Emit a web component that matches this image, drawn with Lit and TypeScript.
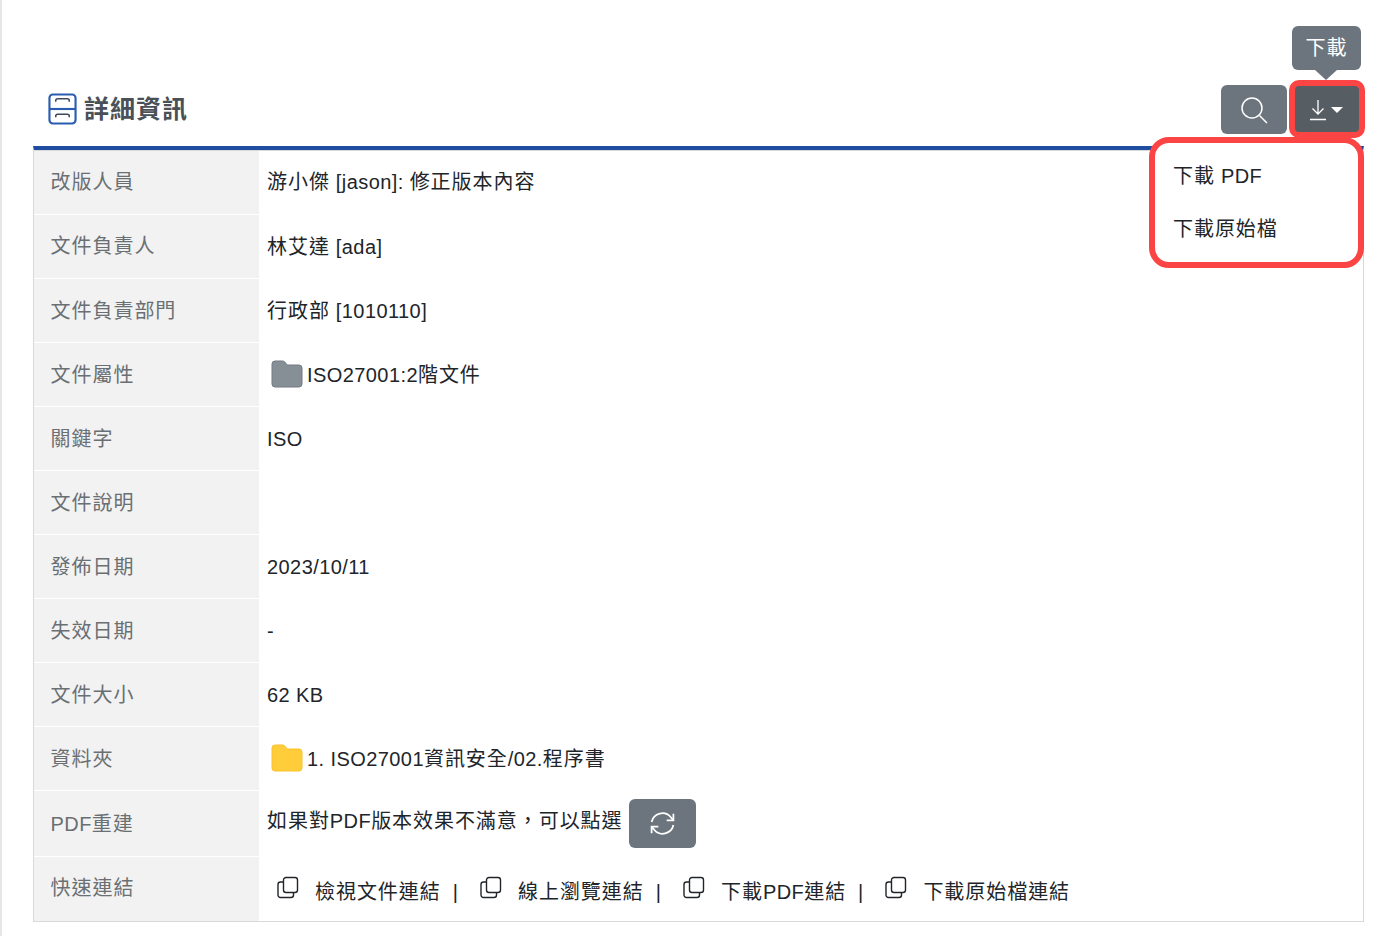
import { LitElement, html, css } from "lit";
import { customElement } from "lit/decorators.js";

// Chinese runs sit on a slightly wider advance than Latin runs in the reference.
const t = (s: string) =>
  s.split(/([\u2E80-\uFFEF]+)/).map((p, i) => (i % 2 ? html`<span class="cjk">${p}</span>` : p));

const copyIcon = html`<svg class="copy" viewBox="0 0 24 24" fill="none" stroke="#212529" stroke-width="1.4"><rect x="7.5" y="1.5" width="14" height="15" rx="2.5"/><path d="M7.5 6H4.5A2.5 2.5 0 0 0 2 8.500V19a2.500 2.500 0 0 0 2.500 2.500H15a2.500 2.500 0 0 0 2.500-2.500v-2.500"/></svg>`;
const folder = (fill: string, stroke: string) => html`<svg class="folder" viewBox="0 0 32 28"><path d="M1 4a3 3 0 0 1 3-3h7.500a3 3 0 0 1 2.300 1l2.400 3H28a3 3 0 0 1 3 3v16a3 3 0 0 1-3 3H4a3 3 0 0 1-3-3Z" fill="${fill}" stroke="${stroke}" stroke-width="1"/></svg>`;

@customElement("app-root")
export class AppRoot extends LitElement {
  static styles = css`
    :host { display: block; height: 936px; box-sizing: border-box; border-left: 2px solid #e6e6e6; padding: 0 36px 0 31px; background: #fff; position: relative;
      font-family: "Liberation Sans", "Noto Sans CJK TC", sans-serif; font-size: 20px; letter-spacing: .42px; color: #212529; overflow: hidden; }
    .cjk { letter-spacing: .95px; }
    .head { height: 146px; box-sizing: border-box; padding: 85px 4px 0 15px; display: flex; justify-content: space-between; align-items: flex-start; }
    .title { display: flex; align-items: center; gap: 7px; height: 46px; font-size: 25px; font-weight: 700; color: #495057; letter-spacing: 1px; }
    .title span { margin-top: -3px; }
    .title svg { width: 29px; height: 32px; margin-top: 1px; }
    .tools { display: flex; gap: 3px; width: 139px; }
    .btn { height: 49px; border-radius: 6px; background: #6c757d; display: flex; align-items: center; justify-content: center; box-sizing: border-box; }
    .search { width: 66px; }
    .search svg { width: 28px; height: 28px; }
    .dl { width: 70px; background: #565e64; gap: 3px; padding-left: 1px; }
    .dl svg { width: 20px; height: 22px; }
    .caret { width: 0; height: 0; border: 6px solid transparent; border-top-color: #fff; border-bottom: 0; }
    .table { border: 1px solid #d9d9d9; border-top: 4px solid #1f4ea1; }
    .rows { border-top: 1px solid #d9d9d9; }
    .row { display: grid; grid-template-columns: 225px 1fr; height: 64px; }
    .row.pdf { height: 66px; }
    .k { background: #f2f2f2; color: #6a6f73; padding: 20px 0 0 16.6px; box-sizing: border-box; border-bottom: 1px solid #fff; line-height: 24px; }
    .row:nth-child(-n+2) .k { padding-top: 19px; }
    .row.pdf .k { padding-top: 21px; }
    .row.quick .k { padding-top: 19px; }
    .row:last-child .k { border-bottom: 0; }
    .v { padding: 20px 0 0 8px; line-height: 24px; display: flex; align-items: flex-start; box-sizing: border-box; white-space: pre; }
    .row:first-child .v { padding-top: 19px; }
    .row.pdf .v { padding-top: 18px; }
    .folder { width: 32px; height: 28px; margin: -3px 4px 0 4px; flex: none; }
    .redo { width: 67px; height: 49px; border-radius: 6px; background: #6c757d; display: flex; align-items: center; justify-content: center; margin: -10px 0 0 6px; }
    .redo svg { width: 27px; height: 27px; }
    .links { padding: 23px 0 0 17px; }
    .copy { width: 24px; height: 24px; margin: -4px 15px 0 0; flex: none; }
    .sep { margin: 0 20.7px 0 12px; }
    .tip { position: absolute; left: 1290px; top: 26px; width: 69px; height: 44px; border-radius: 6px; background: #6c757d; color: #fff; display: flex; align-items: center; justify-content: center; padding-bottom: 4px; box-sizing: border-box; }
    .tip::after { content: ""; position: absolute; left: 23px; bottom: -10px; border: 11px solid transparent; border-top: 10px solid #6c757d; border-bottom: 0; }
    .ring { position: absolute; left: 1287px; top: 80px; width: 76px; height: 58px; box-sizing: border-box; border: 6px solid #fb4444; border-radius: 10px; }
    .menu { position: absolute; left: 1147px; top: 137px; width: 215px; height: 131px; box-sizing: border-box; background: #fff; border: 6px solid #fb4444; border-radius: 20px; padding: 21px 0 0 18px; display: flex; flex-direction: column; gap: 29px; color: #212529; }
    .menu > span { line-height: 24px; }
  `;

  rows: [string, unknown][] = [
    ["改版人員", t("游小傑 [jason]: 修正版本內容")],
    ["文件負責人", t("林艾達 [ada]")],
    ["文件負責部門", t("行政部 [1010110]")],
    ["文件屬性", html`${folder("#868e96", "#737b83")}<span>${t("ISO27001:2階文件")}</span>`],
    ["關鍵字", "ISO"],
    ["文件說明", ""],
    ["發佈日期", "2023/10/11"],
    ["失效日期", "-"],
    ["文件大小", "62 KB"],
    ["資料夾", html`${folder("#ffcd39", "#fdc22a")}<span>${t("1. ISO27001資訊安全/02.程序書")}</span>`],
  ];

  render() {
    const links = ["檢視文件連結", "線上瀏覽連結", "下載PDF連結", "下載原始檔連結"];
    return html`
      <div class="head">
        <div class="title">
          <svg viewBox="0 0 30 33" fill="none" stroke="#2a5db0" stroke-width="2.200"><rect x="1.500" y="1.500" width="27" height="30" rx="3.500"/><path d="M1.500 16.500h27"/><path d="M8 9V8a2 2 0 0 1 2-2h10a2 2 0 0 1 2 2v1M8 25v-1a2 2 0 0 1 2-2h10a2 2 0 0 1 2 2v1" stroke="#3d4a5c" stroke-width="1.600"/></svg>
          <span>詳細資訊</span>
        </div>
        <div class="tools">
          <div class="btn search"><svg viewBox="0 0 28 28" fill="none" stroke="#fff" stroke-width="1.500"><circle cx="12" cy="12" r="10"/><path d="M19.500 19.500 27 27"/></svg></div>
          <div class="btn dl"><svg viewBox="0 0 20 22" fill="none" stroke="#fff" stroke-width="1.300"><path d="M10 1v14M4.500 9.500 10 15l5.500-5.500M2 20.500h16"/></svg><span class="caret"></span></div>
        </div>
      </div>
      <div class="table"><div class="rows">
        ${this.rows.map(([k, v]) => html`<div class="row"><div class="k">${t(k)}</div><div class="v">${v}</div></div>`)}
        <div class="row pdf"><div class="k">${t("PDF重建")}</div><div class="v"><span>${t("如果對PDF版本效果不滿意，可以點選")}</span><div class="redo"><svg viewBox="0 0 26 26" fill="none" stroke="#fff" stroke-width="1.700"><path d="M2.500 11.500A10.600 10.600 0 0 1 21 7l2.500 3M23.500 14.500A10.600 10.600 0 0 1 5 19l-2.500-3"/><path d="M23.500 3.500v6.500h-6.500M2.500 22.500V16h6.500"/></svg></div></div></div>
        <div class="row quick"><div class="k">${t("快速連結")}</div><div class="v links">${links.map((l, i) => html`${copyIcon}<span>${t(l)}</span>${i < 3 ? html`<span class="sep">|</span>` : ""}`)}</div></div>
      </div></div>
      <div class="tip"><span class="cjk">下載</span></div>
      <div class="ring"></div>
      <div class="menu"><span>${t("下載 PDF")}</span><span>${t("下載原始檔")}</span></div>
    `;
  }
}
